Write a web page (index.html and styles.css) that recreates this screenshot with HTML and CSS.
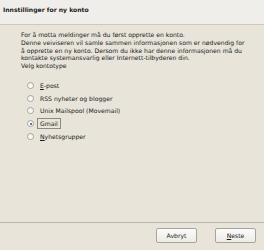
FILE: index.html
```html
<!DOCTYPE html>
<html lang="no">
<head>
    <meta charset="UTF-8">
    <title>Innstillinger for ny konto</title>
    <link rel="stylesheet" href="styles.css">
</head>
<body>
    <div class="wizard">
        <header class="title-bar">Innstillinger for ny konto</header>
        <div class="content">
            <p class="intro">For å motta meldinger må du først opprette en konto.<br>
            Denne veiviseren vil samle sammen informasjonen som er nødvendig for<br>
            å opprette en ny konto. Dersom du ikke har denne informasjonen må du<br>
            kontakte systemansvarlig eller Internett-tilbyderen din.<br>
            Velg kontotype</p>
            <div class="options">
                <label class="option"><span class="radio"></span><span><u>E</u>-post</span></label>
                <label class="option"><span class="radio"></span><span>RSS nyheter og blogger</span></label>
                <label class="option"><span class="radio"></span><span>Unix Mailspool (Movemail)</span></label>
                <label class="option"><span class="radio checked"></span><span class="focus">Gmail</span></label>
                <label class="option"><span class="radio"></span><span><u>N</u>yhetsgrupper</span></label>
            </div>
        </div>
        <div class="button-row">
            <button class="btn">Avbryt</button>
            <button class="btn"><u>N</u>este</button>
        </div>
    </div>
</body>
</html>
```

FILE: styles.css
```css
html, body {
    margin: 0;
    padding: 0;
    height: 100%;
}
body {
    font-family: "DejaVu Sans", sans-serif;
    font-size: 6.1px;
    color: #1a1a1a;
    background-color: #e8e4da;
}
.wizard {
    display: flex;
    flex-direction: column;
    height: 250px;
}
.title-bar {
    height: 24px;
    line-height: 20px;
    padding-left: 3px;
    font-weight: bold;
    font-size: 6.1px;
    background-color: #f0eeea;
    border-bottom: 1px solid #cdc9c0;
}
.content {
    flex: 1;
    padding: 6px 0 0 21px;
}
.intro {
    margin: 0;
    line-height: 7.8px;
}
.options {
    display: flex;
    flex-direction: column;
    padding: 9px 0 0 6px;
}
.option {
    display: flex;
    align-items: center;
    gap: 6px;
    height: 12.75px;
    color: #1a1a1a;
}
.radio {
    width: 7px;
    height: 7px;
    border-radius: 50%;
    border: 1px solid #a9a59c;
    background: linear-gradient(#f1f0ec, #ffffff);
    box-sizing: border-box;
    position: relative;
}
.radio.checked::after {
    content: "";
    position: absolute;
    left: 1.5px;
    top: 1.5px;
    width: 2px;
    height: 2px;
    border-radius: 50%;
    background-color: #2c4c7c;
}
.focus {
    outline: 1px solid #8e8a82;
    padding: 1px 2px;
    margin-left: -2px;
}
.button-row {
    display: flex;
    justify-content: flex-end;
    gap: 18px;
    padding: 5px 8px 7px 0;
    border-top: 1px solid #b9b5ab;
}
.btn {
    width: 41px;
    height: 15px;
    font-family: "DejaVu Sans", sans-serif;
    font-size: 6.1px;
    color: #1a1a1a;
    background: linear-gradient(#fbfbfa, #ecebe7);
    border: 1px solid #a8a49b;
    border-radius: 2px;
    padding: 0;
}
```
